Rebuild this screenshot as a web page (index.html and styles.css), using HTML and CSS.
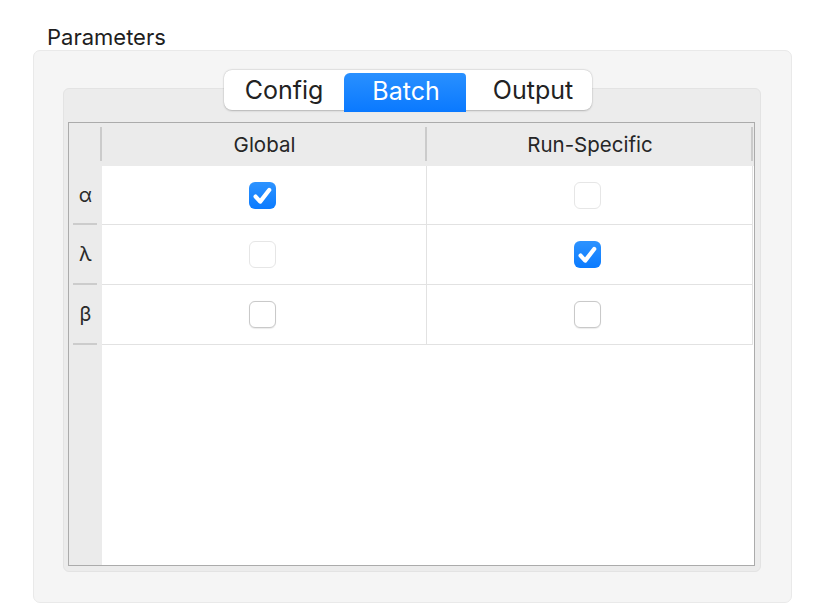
FILE: index.html
```html
<!DOCTYPE html>
<html>
<head>
<meta charset="utf-8">
<link rel="stylesheet" href="styles.css">
</head>
<body>
<div class="title">Parameters</div>
<div class="group">
  <div class="tabview">
    <div class="segmented">
      <div class="seg seg-config">Config</div>
      <div class="seg seg-batch selected">Batch</div>
      <div class="seg seg-output">Output</div>
    </div>
    <div class="table">
      <div class="labels">
        <div class="label-head"><span class="head-sep"></span></div>
        <div class="label-cell first">α</div>
        <div class="label-cell">λ</div>
        <div class="label-cell">β</div>
      </div>
      <div class="body">
        <div class="head">
          <div class="hcell hcell-a">Global<span class="head-sep"></span></div>
          <div class="hcell hcell-b">Run-Specific<span class="head-sep"></span></div>
        </div>
        <div class="row first">
          <div class="cell cell-a"><span class="cb checked"><svg viewBox="0 0 27 27" width="27" height="27"><path d="M6.6 14.6 L11.2 19.6 L20.2 8" fill="none" stroke="#fff" stroke-width="4.2" stroke-linecap="round" stroke-linejoin="round"/></svg></span></div>
          <div class="cell cell-b"><span class="cb faint"></span></div>
        </div>
        <div class="row">
          <div class="cell cell-a"><span class="cb faint"></span></div>
          <div class="cell cell-b"><span class="cb checked"><svg viewBox="0 0 27 27" width="27" height="27"><path d="M6.6 14.6 L11.2 19.6 L20.2 8" fill="none" stroke="#fff" stroke-width="4.2" stroke-linecap="round" stroke-linejoin="round"/></svg></span></div>
        </div>
        <div class="row">
          <div class="cell cell-a"><span class="cb"></span></div>
          <div class="cell cell-b"><span class="cb"></span></div>
        </div>
      </div>
    </div>
  </div>
</div>
</body>
</html>
```
FILE: styles.css
```css
* { box-sizing: border-box; }
body {
  margin: 0;
  background: #ffffff;
  font-family: Inter, "Noto Sans", sans-serif;
  color: #222222;
}
.title {
  margin: 25px 0 0 47px;
  font-size: 22px;
  line-height: 25px;
  height: 25px;
  color: #1e1e1e;
}
.group {
  margin: 0 0 0 33px;
  width: 759px;
  height: 553px;
  background: #f5f5f5;
  border: 1px solid #e9e9e9;
  border-radius: 7px;
  padding: 37px 29px 0 29px;
}
.tabview {
  position: relative;
  width: 698px;
  height: 484px;
  background: #ececec;
  border: 1px solid #e3e3e3;
  border-radius: 6px;
  padding: 33px 5px 5px 4px;
}
.segmented {
  position: absolute;
  top: -19px;
  left: 160px;
  width: 368px;
  height: 40px;
  display: flex;
  background: #ffffff;
  border-radius: 8px;
  box-shadow: 0 0.5px 2px rgba(0,0,0,0.22), 0 0 0 0.5px rgba(0,0,0,0.06);
  font-size: 25px;
  color: #222222;
}
.seg {
  display: flex;
  align-items: center;
  justify-content: center;
}
.seg-config { width: 120px; }
.seg-batch { width: 122px; padding-left: 2px; }
.seg-output { width: 126px; padding-left: 8px; }
.seg.selected {
  margin-top: 3px;
  margin-bottom: -2px;
  padding-bottom: 3px;
  color: #ffffff;
  background: linear-gradient(#2990ff, #0a79ff);
  border-radius: 6px 4px 0 0;
}
.table {
  display: flex;
  width: 687px;
  height: 444px;
  background: #ffffff;
  border: 1px solid #ababab;
}
.labels {
  width: 33px;
  background: #ebebeb;
  display: flex;
  flex-direction: column;
}
.label-head {
  position: relative;
  height: 43px;
}
.head-sep {
  position: absolute;
  right: 0;
  top: 4px;
  width: 2px;
  height: 34px;
  background: #cbcbcb;
}
.label-cell {
  position: relative;
  height: 60px;
  display: flex;
  align-items: center;
  justify-content: center;
  font-size: 20px;
  color: #2a2a2a;
  padding-bottom: 2px;
}
.label-cell.first { height: 59px; }
.label-cell::after {
  content: "";
  position: absolute;
  left: 4px;
  right: 5px;
  bottom: 0;
  height: 2px;
  background: #cccccc;
}
.body {
  flex: 1;
  display: flex;
  flex-direction: column;
}
.head {
  display: flex;
  height: 43px;
  background: #ebebeb;
}
.hcell {
  position: relative;
  display: flex;
  align-items: center;
  justify-content: center;
  font-size: 20.5px;
  color: #262626;
}
.hcell-a { width: 325px; }
.hcell-b { width: 326px; }
.row {
  display: flex;
  height: 60px;
}
.row.first { height: 59px; }
.cell {
  display: flex;
  align-items: center;
  justify-content: center;
  border-right: 1px solid #e2e2e2;
  border-bottom: 1px solid #e2e2e2;
}
.cell-a { width: 325px; padding-right: 4px; }
.cell-b { width: 326px; padding-right: 4px; }
.cb {
  display: block;
  width: 27px;
  height: 27px;
  border-radius: 6px;
  background: #ffffff;
  border: 1px solid #c9c9c9;
  box-shadow: 0 0.5px 1px rgba(0,0,0,0.08);
}
.cb.faint {
  border-color: #e6e6e6;
  box-shadow: none;
}
.cb.checked {
  border: none;
  background: linear-gradient(#2d93ff, #0b7bff);
  box-shadow: none;
}
.cb svg { display: block; }
```
